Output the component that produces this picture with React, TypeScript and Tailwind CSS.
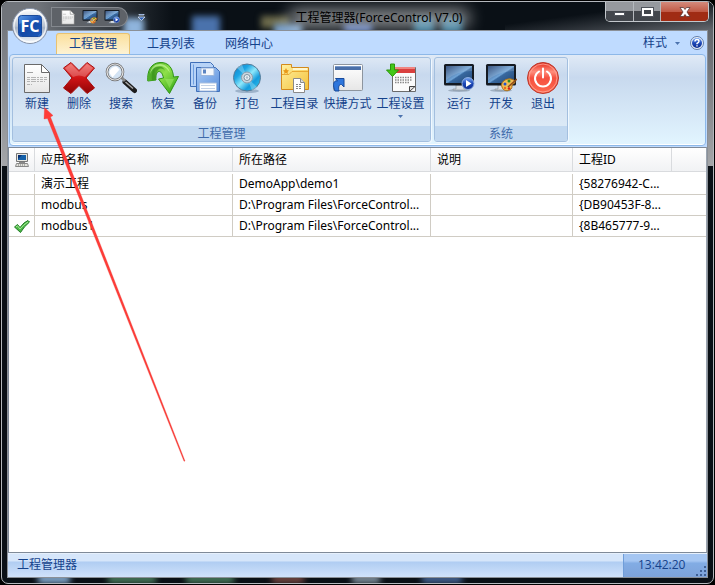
import clsx from 'clsx';
import { useState } from 'react';
import type { ReactNode } from 'react';

type Tool = { id: string; label: string; icon: ReactNode; wide?: boolean; menu?: boolean };
type Project = { name: string; path: string; note: string; id: string; active: boolean };

const Icon = ({ children, className = 'h-8 w-8' }: { children: ReactNode; className?: string }) => (
  <svg viewBox="0 0 32 32" className={className} aria-hidden="true">
    {children}
  </svg>
);

// shared gradients for all the icons
const Gradients = () => (
  <svg className="absolute h-0 w-0" aria-hidden="true">
    <defs>
      <linearGradient id="red" x1="0" y1="0" x2="0" y2="1">
        <stop offset="0" stopColor="#f0605c" />
        <stop offset="0.5" stopColor="#cf1416" />
        <stop offset="1" stopColor="#8e0405" />
      </linearGradient>
      <linearGradient id="green" x1="0" y1="0" x2="1" y2="1">
        <stop offset="0" stopColor="#4cae22" />
        <stop offset="0.45" stopColor="#8ee04a" />
        <stop offset="1" stopColor="#2ba010" />
      </linearGradient>
      <linearGradient id="floppy" x1="0" y1="0" x2="1" y2="1">
        <stop offset="0" stopColor="#a9cbf6" />
        <stop offset="1" stopColor="#5a8fdc" />
      </linearGradient>
      <linearGradient id="disc" x1="0" y1="0" x2="1" y2="1">
        <stop offset="0" stopColor="#127cc8" />
        <stop offset="0.3" stopColor="#1ba5e4" />
        <stop offset="0.5" stopColor="#8fe8fb" />
        <stop offset="0.7" stopColor="#159bdc" />
        <stop offset="1" stopColor="#35d0f2" />
      </linearGradient>
      <linearGradient id="folder" x1="0" y1="0" x2="1" y2="1">
        <stop offset="0" stopColor="#fff0a0" />
        <stop offset="1" stopColor="#f3c23c" />
      </linearGradient>
      <linearGradient id="paper" x1="0" y1="0" x2="0" y2="1">
        <stop offset="0" stopColor="#ffffff" />
        <stop offset="1" stopColor="#e6e6e6" />
      </linearGradient>
      <linearGradient id="screen" x1="0" y1="0" x2="1" y2="1">
        <stop offset="0" stopColor="#1c3a6c" />
        <stop offset="0.5" stopColor="#6fa3d6" />
        <stop offset="0.55" stopColor="#38689f" />
        <stop offset="1" stopColor="#234878" />
      </linearGradient>
      <linearGradient id="play" x1="0" y1="0" x2="0" y2="1">
        <stop offset="0" stopColor="#7aa8f2" />
        <stop offset="0.5" stopColor="#1c48b8" />
        <stop offset="1" stopColor="#0d2c8c" />
      </linearGradient>
      <linearGradient id="power" x1="0" y1="0" x2="0" y2="1">
        <stop offset="0" stopColor="#e62b1c" />
        <stop offset="0.3" stopColor="#ff8d7c" />
        <stop offset="0.5" stopColor="#f5503f" />
        <stop offset="1" stopColor="#ff6a50" />
      </linearGradient>
      <linearGradient id="blue" x1="0" y1="0" x2="1" y2="1">
        <stop offset="0" stopColor="#5d9be8" />
        <stop offset="0.5" stopColor="#1c56b8" />
        <stop offset="1" stopColor="#2f7ae0" />
      </linearGradient>
      <linearGradient id="orb" x1="0" y1="0" x2="0" y2="1">
        <stop offset="0" stopColor="#ffffff" />
        <stop offset="0.5" stopColor="#b9c2d0" />
        <stop offset="0.55" stopColor="#a3b0c4" />
        <stop offset="1" stopColor="#f6fbff" />
      </linearGradient>
    </defs>
  </svg>
);

const NewIcon = ({ className }: { className?: string }) => (
  <Icon className={className}>
    <path d="M3.500 2.500h17l8 8v20h-25z" fill="url(#paper)" stroke="#6a6a6a" />
    <path d="M20.500 2.500v8h8z" fill="#fff" stroke="#6a6a6a" />
    <path d="M6 10.500h6" stroke="#a0a0a0" />
    <path d="M6 15.500h20M6 17.500h20M6 19.500h18M6 22.500h5" stroke="#b4b4b4" strokeDasharray="3 1 5 1 2 1" />
  </Icon>
);

const DeleteIcon = () => (
  <Icon>
    <path
      d="M8 0.500 16 8.500 24 0.500 31.500 6 23 16 31.500 26 24 31.500 16 23.500 8 31.500 0.500 26 9 16 0.500 6z"
      fill="url(#red)"
      stroke="#a80c0c"
    />
    <path d="M8 2 16 10 24 2l6 4-8 9q-6-3-12 0L2 6z" fill="#fff" opacity="0.220" />
  </Icon>
);

const SearchIcon = () => (
  <Icon>
    <path d="m20 20 9.500 8.500" stroke="#1c1c1c" strokeWidth="5" strokeLinecap="round" />
    <path d="m16 15 4 4" stroke="#8a8a8a" strokeWidth="3" />
    <path d="m20.500 20 7.500 6.500" stroke="#a8a8a8" strokeWidth="1.500" />
    <circle cx="10" cy="10" r="8" fill="#d3e3f3" stroke="#6b6b6b" strokeWidth="2.600" />
    <circle cx="10" cy="10" r="8" fill="none" stroke="#e4e4e4" strokeWidth="1.200" />
    <path d="M4.500 11c0-4 3-6.500 7-6.500l3 3-7 8z" fill="#fff" />
  </Icon>
);

const RestoreIcon = () => (
  <Icon>
    <path
      d="M0.800 19C0 9 4 1 13 0.500 22 0 26 7 26.500 15L31.500 14.500 22.500 31.500 11.500 17l5-1C15.500 11 13.500 9.500 12 9.500 9.500 9.500 8.500 14 9 18z"
      fill="url(#green)"
      stroke="#2f9414"
    />
    <path d="M0.800 19C0.500 11 4 5 9 4c-2 3-2 8 0 14z" fill="#4fae2a" />
    <path d="M5 18C4 11 6 6 10 5c4-1 7 0 8 4-2-3-5-3-7-1-2 2-2 6-2 10z" fill="#3a921c" opacity="0.700" />
    <path d="M3 12C4 5 8 2 13 2c5 0 9 4 10 9-3-5-6-7-10-7-5 0-8 3-10 8z" fill="#d6ffae" opacity="0.600" />
    <path d="M18 17h9l-4.500 9z" fill="#a4ee6c" opacity="0.500" />
  </Icon>
);

const Floppy = ({ x, y }: { x: number; y: number }) => (
  <g transform={`translate(${x} ${y})`}>
    <path d="M0.500 0.500h19l4 4v20h-23z" fill="url(#floppy)" stroke="#3f6fb8" />
    <path d="M5 1h13v7.500H5z" fill="#f4f7fb" stroke="#9bb6dc" />
    <path d="M7 2.500h3v4H7z" fill="#5b84c2" />
    <path d="M3.500 16h17v8h-17z" fill="#fff" stroke="#a9bfdf" />
    <path d="M5 18.500h14M5 21.500h14" stroke="#c4d2e6" />
  </g>
);

const BackupIcon = () => (
  <Icon>
    <path d="M1.500 0.500h20l3 3v21h-23z" fill="#b7d3f7" stroke="#3f6fb8" />
    <path d="M4.500 2.500v20" stroke="#6f9fe0" />
    <Floppy x={7} y={5} />
  </Icon>
);

const DiscIcon = () => (
  <Icon>
    <ellipse cx="16" cy="29" rx="12" ry="2" fill="#6d87a3" opacity="0.500" />
    <circle cx="16" cy="15.500" r="13.500" fill="url(#disc)" stroke="#587a96" />
    <path d="M16 15.500 6 6a14 14 0 0 1 5-3.500zM16 15.500l10 9.500a14 14 0 0 1-5 3.500z" fill="#d9fcff" opacity="0.300" />
    <circle cx="16" cy="15.500" r="5.500" fill="#cad6de" stroke="#8b9dad" />
    <circle cx="16" cy="15.500" r="3" fill="#eef4f8" stroke="#79909f" />
    <circle cx="16" cy="15.500" r="1.200" fill="#a8bac8" />
  </Icon>
);

const FolderIcon = () => (
  <Icon>
    <path d="M2.500 2.500h10v3h17v22h-27z" fill="url(#folder)" stroke="#d38a1c" />
    <path d="M3 12.500h7l3-3h16" stroke="#e8a932" fill="none" />
    <path d="M14 7h14.500" stroke="#fff7cf" fill="none" strokeWidth="2" />
    <path d="m7 6 1 2 2 .500-1.500 1.500.500 2L7 11l-2 1 .500-2L4 8.500 6 8z" fill="#e89a1a" />
    <path d="M14.500 16.500h7l4 4v10h-11z" fill="#fff" stroke="#8a8a8a" />
    <path d="M21.500 16.500v4h4" fill="#ddd" stroke="#8a8a8a" />
    <path d="M17 22.500h6M17 24.500h6M17 26.500h6" stroke="#888" strokeDasharray="2 1" />
  </Icon>
);

const ShortcutIcon = () => (
  <Icon>
    <rect x="1.500" y="2.500" width="29" height="26" rx="1" fill="url(#paper)" stroke="#8d959e" />
    <path d="M3 4h26v4H3z" fill="#4a6fa8" />
    <path d="M3 4h26v1H3z" fill="#7d9dcb" />
    <path d="M3 29C0 22 2 18 5.500 19L3.500 16.500h8.500V25l-2.500-2.500C7 22 6 25 7 29z" fill="#2e76dc" stroke="#174a9c" />
  </Icon>
);

const SettingsIcon = () => (
  <Icon>
    <path d="M7.500 5.500h23v24h-23z" fill="#fbfbfb" stroke="#6b6b6b" />
    <path d="M8 5h22v6H8z" fill="#d9403e" />
    <path d="M8 5h22v2H8z" fill="#f08580" />
    <path d="M10 15.500h17M10 18h17M10 20.500h14" stroke="#8a8a8a" strokeWidth="1.500" strokeDasharray="1.500 1" />
    <path d="M24.500 29.500v-5h5.500z" fill="#e4e4e4" stroke="#444" />
    <path d="M5.500 2h4v6h4l-6 6.500-6-6.500h4z" fill="#42c818" stroke="#2c960c" />
  </Icon>
);

const Monitor = () => (
  <>
    <ellipse cx="16" cy="28.500" rx="11" ry="1.500" fill="#5b6b7c" opacity="0.400" />
    <path d="M13 23h7l1 4h3v1H10v-1h3z" fill="#d9dde2" stroke="#878e96" strokeWidth="0.600" />
    <rect x="1" y="2" width="30" height="21.500" rx="1.500" fill="#151a22" />
    <path d="M3 4h26v17H3z" fill="url(#screen)" />
    <path d="M3 4h26v5Q14 9 3 18z" fill="#fff" opacity="0.150" />
  </>
);

const RunIcon = ({ className }: { className?: string }) => (
  <Icon className={className}>
    <Monitor />
    <circle cx="25" cy="21.500" r="6" fill="url(#play)" stroke="#8faee0" />
    <path d="m23 18 5.500 3.500L23 25z" fill="#fff" />
  </Icon>
);

const DevelopIcon = ({ className }: { className?: string }) => (
  <Icon className={className}>
    <Monitor />
    <path
      d="M17 25c-2-4 3-9 9-8 5 1 5 4 2 5-2 1 0 3-2 5-3 3-8 2-9-2z"
      fill="#f2bd55"
      stroke="#a86d18"
    />
    <circle cx="20" cy="22" r="1.500" fill="#2355c8" />
    <circle cx="24" cy="19" r="1.500" fill="#2c8a26" />
    <circle cx="24" cy="26.500" r="1.300" fill="#d41f16" />
    <circle cx="20" cy="26" r="1.200" fill="#f06a18" />
    <path d="m23 25 9-8" stroke="#8c4a18" strokeWidth="1.500" />
  </Icon>
);

const ExitIcon = () => (
  <Icon>
    <circle cx="16" cy="16" r="15.500" fill="url(#power)" stroke="#b8382c" />
    <circle cx="16" cy="16" r="14" fill="none" stroke="#ffab9c" strokeWidth="0.800" />
    <path d="M12 9.500a8 8 0 1 0 8 0" fill="none" stroke="#fff" strokeWidth="2" strokeLinecap="round" />
    <path d="M16 6.500v9" stroke="#fff" strokeWidth="2" strokeLinecap="round" />
  </Icon>
);

const CaretIcon = ({ className = 'h-[3px] w-[5px]' }: { className?: string }) => (
  <svg viewBox="0 0 5 3" className={className} aria-hidden="true">
    <path d="M0 0h5L2.500 3z" fill="#4c73ae" />
  </svg>
);

const projectTools: Tool[] = [
  { id: 'new', label: '新建', icon: <NewIcon /> },
  { id: 'delete', label: '删除', icon: <DeleteIcon /> },
  { id: 'search', label: '搜索', icon: <SearchIcon /> },
  { id: 'restore', label: '恢复', icon: <RestoreIcon /> },
  { id: 'backup', label: '备份', icon: <BackupIcon /> },
  { id: 'pack', label: '打包', icon: <DiscIcon /> },
  { id: 'folder', label: '工程目录', icon: <FolderIcon />, wide: true },
  { id: 'shortcut', label: '快捷方式', icon: <ShortcutIcon />, wide: true },
  { id: 'settings', label: '工程设置', icon: <SettingsIcon />, wide: true, menu: true },
];

const systemTools: Tool[] = [
  { id: 'run', label: '运行', icon: <RunIcon /> },
  { id: 'develop', label: '开发', icon: <DevelopIcon /> },
  { id: 'exit', label: '退出', icon: <ExitIcon /> },
];

const projects: Project[] = [
  { name: '演示工程', path: 'DemoApp\\demo1', note: '', id: '{58276942-C...', active: false },
  { name: 'modbus', path: 'D:\\Program Files\\ForceControl...', note: '', id: '{DB90453F-8...', active: false },
  { name: 'modbus1', path: 'D:\\Program Files\\ForceControl...', note: '', id: '{8B465777-9...', active: true },
];

// desktop colours that shine through the glass frame
const glows = [
  'left-[122px] top-[16px] h-5 w-5 bg-[#8fb4dc]',
  'left-[190px] top-[14px] h-6 w-7 bg-[#4a72ac]',
  'left-[259px] top-[14px] h-3 w-7 bg-[#6e6c4c]',
  'left-[272px] top-[22px] h-3 w-7 bg-[#7ea4cc]',
  'left-[342px] top-[22px] h-2 w-7 bg-[#5f7fc4]',
  'left-[412px] top-[16px] h-4 w-5 bg-[#2c6f90]',
  'left-[440px] top-[16px] h-4 w-5 bg-[#2c6f90]',
  'left-[36px] bottom-0 h-2 w-8 bg-[#8fb8e0]',
  'left-[106px] bottom-0 h-2 w-12 bg-[#4c8060]',
  'left-[184px] bottom-0 h-2 w-12 bg-[#4c8060]',
  'left-[270px] bottom-0 h-2 w-8 bg-[#7a4a44]',
  'left-[350px] bottom-0 h-2 w-7 bg-[#8a9aa8]',
  'left-[420px] bottom-0 h-2 w-10 bg-[#49699c]',
];

const TitleBar = () => (
  <header className="relative flex h-[28px] items-start">
    <button type="button" aria-label="FC" className="absolute top-[6px] left-[5px] z-10 h-9 w-9">
      <svg viewBox="0 0 36 36" className="h-9 w-9" aria-hidden="true">
        <circle cx="18" cy="18" r="17.500" fill="url(#orb)" stroke="#8592a8" />
        <circle cx="18" cy="18" r="16" fill="none" stroke="#fff" strokeWidth="1.500" opacity="0.700" />
        <rect x="6.500" y="7.500" width="23" height="21" rx="3" fill="url(#blue)" stroke="#1c4c9c" />
        <path d="M7 16q11-5 22 0v9l-3 3H10l-3-3z" fill="#0c3c94" opacity="0.500" />
        <text
          x="18"
          y="24"
          textAnchor="middle"
          fill="#fff"
          fontSize="16"
          fontWeight="700"
          fontFamily="Open Sans, sans-serif"
        >
          FC
        </text>
      </svg>
    </button>
    <div className="mt-[5px] ml-[44px] flex h-5 w-[77px] items-center gap-1.5 rounded-tl-none rounded-r-full rounded-bl-xl border border-[#84888e] bg-[#5e6268] pl-2">
      <button type="button" aria-label="新建" className="h-4 w-4">
        <NewIcon className="h-4 w-4" />
      </button>
      <button type="button" aria-label="开发" className="h-4 w-4">
        <DevelopIcon className="h-4 w-4" />
      </button>
      <button type="button" aria-label="运行" className="h-4 w-4">
        <RunIcon className="h-4 w-4" />
      </button>
    </div>
    <button type="button" aria-label="自定义" className="mt-3 ml-2.5 h-[7px] w-[7px]">
      <svg viewBox="0 0 7 7" className="h-[7px] w-[7px]" aria-hidden="true">
        <path d="M1 0h5v1H1zM0 3h7L3.500 6.500z" fill="#2f62b8" stroke="#e4ecf8" strokeWidth="0.700" />
      </svg>
    </button>
    <h1 className="relative mt-2 flex-1 pl-2 text-center text-[12px] leading-4 text-black">
      <span className="relative inline-block">
        <span className="absolute -inset-x-2 inset-y-0 rounded-full bg-white/60 blur-sm" />
        <span className="relative">工程管理器(ForceControl V7.0)</span>
      </span>
    </h1>
    <div className="-mr-px flex h-5 overflow-hidden rounded-b-[5px] border border-t-0 border-[#c3c7cc]">
      <button
        type="button"
        aria-label="最小化"
        className="flex w-7 items-center justify-center border-r border-[#b5b9be] bg-linear-to-b from-[#96999e] from-50% to-[#42464c] to-50%"
      >
        <span className="mt-1 h-1 w-[11px] border border-[#50545c] bg-white" />
      </button>
      <button
        type="button"
        aria-label="最大化"
        className="flex w-[27px] items-center justify-center border-r border-[#b5b9be] bg-linear-to-b from-[#96999e] from-50% to-[#42464c] to-50%"
      >
        <span className="h-2 w-[11px] border-2 border-white bg-[#42464c] outline outline-[#50545c]" />
      </button>
      <button
        type="button"
        aria-label="关闭"
        className="flex w-[47px] items-center justify-center bg-linear-to-b from-[#d38a7c] from-0% via-[#c05a46] via-50% to-[#a02c14] to-55%"
      >
        <svg viewBox="0 0 12 10" className="h-[10px] w-3" aria-hidden="true">
          <path d="M1 .500h3.500L6 2.500 7.500.500H11L8 5l3 4.500H7.500L6 7.500l-1.500 2H1L4 5z" fill="#fff" stroke="#5b3a38" strokeWidth="0.800" />
        </svg>
      </button>
    </div>
  </header>
);

const RibbonGroup = ({ title, tools }: { title: string; tools: Tool[] }) => (
  <section
    aria-label={title}
    className="flex flex-col overflow-hidden rounded-[3px] border border-[#a3bfdf] bg-linear-to-b from-[#dde8f5] from-0% via-[#c8d9ee] via-20% to-[#dbe9f6] to-80% shadow-[1px_1px_0_#f0f8ff]"
  >
    <div className="flex h-[68px] px-[3px] pt-1">
      {tools.map((tool) => (
        <button
          key={tool.id}
          type="button"
          className={clsx(
            'flex flex-col items-center rounded-sm leading-4 text-[#15428b] hover:bg-[#ffe9a8]',
            tool.wide ? 'w-[53px]' : 'w-[42px]',
          )}
        >
          {tool.icon}
          <span className="mt-0.5 whitespace-nowrap">{tool.label}</span>
          {tool.menu && <CaretIcon className="mt-[3px] h-[3px] w-[5px]" />}
        </button>
      ))}
    </div>
    <h2 className="h-[15px] bg-[#c1d8f0] text-center leading-[15px] text-[#3e6aaa]">{title}</h2>
  </section>
);

const Ribbon = () => {
  const tabs = ['工程管理', '工具列表', '网络中心'];
  const [current, setCurrent] = useState(tabs[0]);

  return (
    <div className="bg-[#bfdbff] px-px pb-px">
      <nav className="flex h-[23px] items-end pr-0.5 pl-[47px]">
        {tabs.map((tab) => (
          <button
            key={tab}
            type="button"
            onClick={() => setCurrent(tab)}
            className={clsx(
              'mr-1 h-[21px] w-[74px] rounded-t-[3px] border border-b-0 leading-5 text-[#15428b]',
              current === tab
                ? 'border-[#e8c272] bg-linear-to-b from-[#fbdf9c] to-[#fdf3d4]'
                : 'border-transparent',
            )}
          >
            {tab}
          </button>
        ))}
        <div className="ml-auto flex h-[22px] items-center gap-2.5 text-[#15428b]">
          <button type="button" className="flex items-center gap-2">
            样式
            <CaretIcon />
          </button>
          <button type="button" aria-label="帮助">
            <svg viewBox="0 0 14 14" className="block h-3.5 w-3.5" aria-hidden="true">
              <circle cx="7" cy="7" r="6.500" fill="#e8f0fa" stroke="#607ca8" />
              <circle cx="7" cy="7" r="5" fill="url(#play)" />
              <path d="M5 5.500q0-2 2-2t2 1.700Q9 6.500 7 7.500v.800M7 9.300v1.300" fill="none" stroke="#fff" strokeWidth="1.400" />
            </svg>
          </button>
        </div>
      </nav>
      <div className="flex gap-[3px] rounded-[4px] border border-[#8db8e8] bg-linear-to-b from-[#e0eaf6] from-0% via-[#c8d9ee] via-25% to-[#e2f5ff] to-100% px-0.5 pt-0.5 pb-[3px] shadow-[inset_0_-1px_0_#ffffff]">
        <RibbonGroup title="工程管理" tools={projectTools} />
        <RibbonGroup title="系统" tools={systemTools} />
      </div>
    </div>
  );
};

const ProjectTable = () => {
  const headers = ['应用名称', '所在路径', '说明', '工程ID', ''];

  return (
    <main className="flex-1 border border-[#7f8a98] border-r-[#9aa4b0] bg-white">
      <table className="w-full table-fixed border-separate border-spacing-0 text-left text-black">
        <colgroup>
          <col className="w-[26px]" />
          <col className="w-[198px]" />
          <col className="w-[198px]" />
          <col className="w-[142px]" />
          <col className="w-[99px]" />
          <col />
        </colgroup>
        <thead>
          <tr>
            <th aria-label="状态" className="p-0 pb-0.5">
              <div className="flex h-6 items-center justify-center border-r border-b border-[#d9dbde] bg-linear-to-b from-white to-[#f1f2f4]">
                <svg viewBox="0 0 14 14" className="h-3.5 w-3.5" aria-hidden="true">
                  <path d="M1.500.500h11v8h-11z" fill="#e8e8e2" stroke="#777" />
                  <path d="M3 2h8v5H3z" fill="#1560a8" />
                  <path d="M3 2h4L3 6z" fill="#0a2f70" />
                  <path d="M4 9h6v1.500H4z" fill="#888" />
                  <path d="M1.500 10.500h11l1 3H.500z" fill="#e2e2dc" stroke="#888" />
                  <path d="M3 12h8" stroke="#777" strokeDasharray="1 1" />
                </svg>
              </div>
            </th>
            {headers.map((header) => (
              <th key={header} className="p-0 pb-0.5 font-normal">
                <div
                  className={clsx(
                    'h-6 border-b border-[#d9dbde] bg-linear-to-b from-white to-[#f1f2f4] pl-1.5 leading-6',
                    header && 'border-r',
                  )}
                >
                  {header}
                </div>
              </th>
            ))}
          </tr>
        </thead>
        <tbody className="whitespace-nowrap">
          {projects.map((project) => (
            <tr key={project.id} className="leading-5 *:h-[21px] *:border-b *:border-[#d0ccc4] *:p-0">
              <td className="border-r">
                {project.active && (
                  <svg viewBox="0 0 16 13" className="mx-auto block h-[13px] w-4" aria-label="当前工程">
                    <path d="m.500 7 3-2.500L6 7.500Q10 2 14 .500l1.500 1.500Q10 6.500 6.500 12.500z" fill="#4cb848" stroke="#217a24" />
                    <path d="m2 7 1.500-1.200L6 9q4-5 8-7" fill="none" stroke="#a5ec94" />
                  </svg>
                )}
              </td>
              <td className="border-r">
                <div className="h-5 pl-1.5">{project.name}</div>
              </td>
              <td className="border-r">
                <div className="h-5 pl-1.5">{project.path}</div>
              </td>
              <td className="border-r">{project.note}</td>
              <td>
                <div className="h-5 pl-1.5">{project.id}</div>
              </td>
              <td />
            </tr>
          ))}
        </tbody>
      </table>
    </main>
  );
};

const StatusBar = () => (
  <footer className="flex h-6 border-t border-[#e6f0fc] leading-[22px] text-[#15428b]">
    <div className="flex-1 bg-linear-to-b from-[#d6e6fa] from-30% via-[#b0cdf2] via-35% to-[#d0e2fb] pl-[9px]">工程管理器</div>
    <div className="relative w-[84px] border-l border-[#6f9dd9] bg-linear-to-b from-[#a5c6f2] from-30% via-[#82ace4] via-40% to-[#7ea3da] pl-3.5">
      <time className="font-['Open_Sans',sans-serif]">13:42:20</time>
      <svg viewBox="0 0 11 11" className="absolute right-0 bottom-0 h-[11px] w-[11px]" aria-hidden="true">
        <path d="M8 0h2v2H8zM4 4h2v2H4zM8 4h2v2H8zM0 8h2v2H0zM4 8h2v2H4zM8 8h2v2H8z" fill="#3e5f94" />
      </svg>
    </div>
  </footer>
);

// red pointer to the "新建" button, thin at its tail
const Pointer = () => (
  <svg viewBox="0 0 144 356" className="pointer-events-none absolute top-[106px] left-[42px] z-20 h-[356px] w-[144px]" aria-hidden="true">
    <path d="M2.500 1.500 11 9.500 8.500 11 143 355 142 355.300 5.500 12.500 2 13z" fill="#ff3c38" stroke="#e43531" strokeWidth="0.300" />
  </svg>
);

export default function App() {
  return (
    <div className="relative flex min-h-screen flex-col bg-black p-px font-['Noto_Sans','Noto_Sans_CJK_SC',sans-serif] text-[12px]">
      <Gradients />
      <div className="relative flex flex-1 flex-col overflow-hidden rounded-[7px] border border-[#b4b8bd] bg-[#0a1016] px-[5px] pb-[5px]">
        <div className="absolute inset-y-0 left-0 h-[164px] w-1.5 bg-linear-to-b from-[#6c7077] to-[#a4a6a9]" />
        <div className="absolute inset-y-0 right-0 h-[164px] w-1.5 bg-linear-to-b from-[#55595f] to-[#a4a6a9]" />
        <div className="absolute inset-x-0 top-0 h-[28px] bg-linear-to-r from-[#70747a] from-5% via-[#0a1016] via-24% to-[#0a1016] to-70%" />
        <div className="absolute top-0 right-0 h-[28px] w-52 bg-linear-to-br from-[#0a1016] from-40% to-[#63676d]" />
        {glows.map((glow) => (
          <span key={glow} className={clsx('absolute blur-[3px]', glow)} />
        ))}
        <TitleBar />
        <div className="relative flex flex-1 flex-col border border-[#8b9097] bg-[#bfdbff]">
          <Ribbon />
          <ProjectTable />
          <StatusBar />
        </div>
      </div>
      <Pointer />
    </div>
  );
}
